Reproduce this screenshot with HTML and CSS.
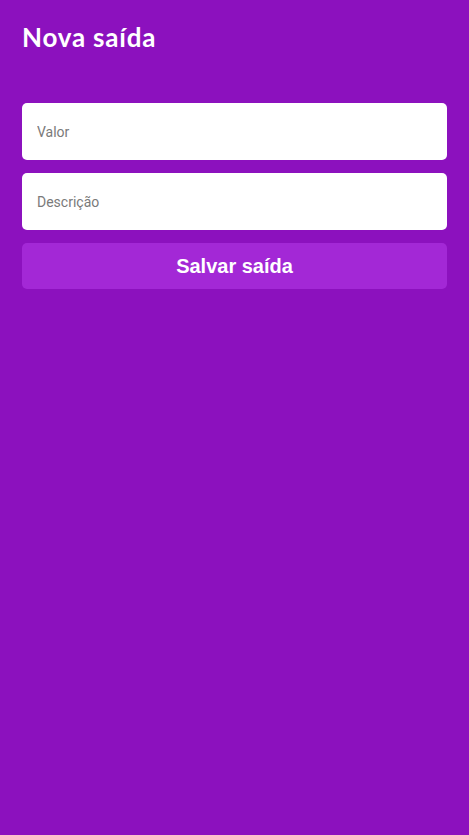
FILE: index.html
```html
<!DOCTYPE html>
<html lang="pt-BR">
<head>
<meta charset="utf-8">
<title>Nova saída</title>
<link rel="stylesheet" href="styles.css">
</head>
<body>
<main class="page">
  <h1 class="title">Nova saída</h1>
  <form class="form">
    <input class="field" type="text" placeholder="Valor">
    <input class="field" type="text" placeholder="Descrição">
    <button class="submit" type="button">Salvar saída</button>
  </form>
</main>
</body>
</html>
```

FILE: styles.css
```css
html, body {
  margin: 0;
  padding: 0;
  background: #8c11be;
  min-height: 100%;
}
.page {
  padding: 22px 22px;
  box-sizing: border-box;
}
.title {
  margin: 0;
  font-family: "Lato", "Open Sans", sans-serif;
  font-weight: 700;
  font-size: 26px;
  line-height: 30px;
  letter-spacing: 0.8px;
  color: #ffffff;
}
.form {
  margin-top: 51px;
  display: flex;
  flex-direction: column;
  gap: 13px;
}
.field {
  box-sizing: border-box;
  height: 57px;
  width: 100%;
  border: none;
  border-radius: 5px;
  background: #ffffff;
  padding: 0 15px;
  font-family: "Roboto", "Liberation Sans", sans-serif;
  font-size: 14px;
  color: #333;
  outline: none;
}
.field::placeholder {
  color: #7a7a7a;
}
.submit {
  height: 46px;
  width: 100%;
  border: none;
  border-radius: 5px;
  background: #a328d6;
  color: #ffffff;
  font-family: "Liberation Sans", Arial, sans-serif;
  font-weight: 700;
  font-size: 20px;
  cursor: pointer;
}
```
